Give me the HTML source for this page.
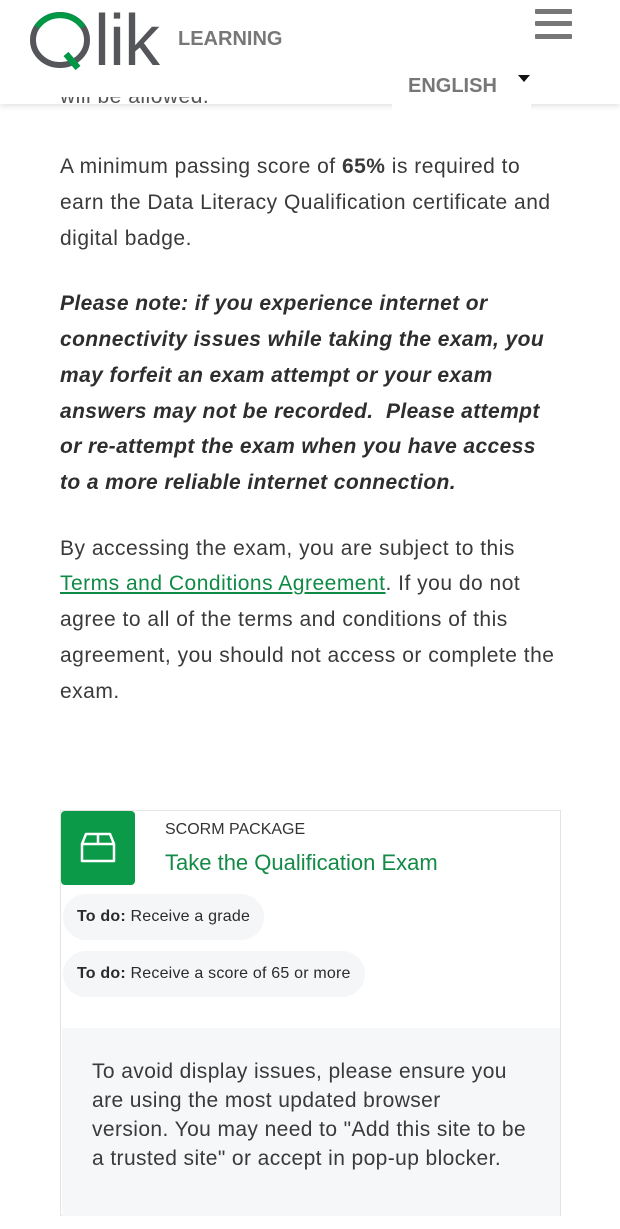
<!DOCTYPE html>
<html><head><meta charset="utf-8"><style>
*{margin:0;padding:0;box-sizing:border-box}
html,body{width:620px;height:1229px;background:#fff;overflow:hidden;font-family:"Liberation Sans",sans-serif;color:#333}
.l{position:absolute;left:60px;white-space:nowrap;font-size:21px;color:#3a3a3a;letter-spacing:0.5px}
.b{font-weight:bold;font-style:italic;color:#2e2e2e;letter-spacing:0.4px}
a{color:#0f8a45;text-decoration:underline}
.hdr{position:absolute;left:0;top:0;width:620px;height:104px;background:#fff;box-shadow:0 2px 6px rgba(0,0,0,.12);z-index:2}
.card{position:absolute;left:60px;top:810px;width:501px;height:406px;border:1px solid #e4e4e4}
.pill{position:absolute;left:2px;height:46px;border-radius:23px;background:#f5f6f8;font-size:16px;color:#2b2b2b;padding:0 14px;line-height:46px;white-space:nowrap;letter-spacing:0.2px}
.gray{position:absolute;left:1px;top:217px;width:498px;height:188px;background:#f6f7f9}
.g{position:absolute;left:30px;white-space:nowrap;font-size:21px;color:#3a3a3a;letter-spacing:0.4px}
</style></head><body>
<div style="position:absolute;left:0;top:97px;width:620px;height:7px;overflow:hidden;z-index:4"><div class="l" style="top:-12px;color:#555">will be allowed.</div></div>
<div class="hdr">
 <svg style="position:absolute;left:28px;top:10px" width="70" height="62" viewBox="0 0 70 62">
  <ellipse cx="32" cy="30" rx="27" ry="25" fill="none" stroke="#54565a" stroke-width="6"/>
  <path d="M9 17 A27 25 0 0 1 55 17" fill="none" stroke="#009845" stroke-width="6"/>
  <path d="M38 44 L50 58" stroke="#009845" stroke-width="6.5"/>
 </svg>
 <div style="position:absolute;left:94px;top:0px;font-size:72px;color:#54565a;letter-spacing:-1px">lik</div>
 <div style="position:absolute;left:178px;top:28px;font-size:20px;font-weight:bold;color:#777">LEARNING</div>
 <div style="position:absolute;left:535px;top:9px;width:37px;height:5px;background:#777;border-radius:1px"></div>
 <div style="position:absolute;left:535px;top:21px;width:37px;height:5px;background:#777;border-radius:1px"></div>
 <div style="position:absolute;left:535px;top:34px;width:37px;height:5px;background:#777;border-radius:1px"></div>
</div>
<div style="position:absolute;left:392px;top:60px;width:139px;height:52px;background:#fff;z-index:5;border-radius:0 0 4px 4px">
 <div style="position:absolute;left:16px;top:15px;font-size:20px;font-weight:bold;color:#777">ENGLISH</div>
 <div style="position:absolute;left:126px;top:15px;width:0;height:0;border-left:6px solid transparent;border-right:6px solid transparent;border-top:7px solid #111"></div>
</div>

<div class="l" style="top:155px">A minimum passing score of <b>65%</b> is required to</div>
<div class="l" style="top:191px">earn the Data Literacy Qualification certificate and</div>
<div class="l" style="top:227px">digital badge.</div>

<div class="l b" style="top:292px">Please note: if you experience internet or</div>
<div class="l b" style="top:328px">connectivity issues while taking the exam, you</div>
<div class="l b" style="top:364px">may forfeit an exam attempt or your exam</div>
<div class="l b" style="top:400px">answers may not be recorded.&nbsp; Please attempt</div>
<div class="l b" style="top:435px">or re-attempt the exam when you have access</div>
<div class="l b" style="top:471px">to a more reliable internet connection.</div>

<div class="l" style="top:537px">By accessing the exam, you are subject to this</div>
<div class="l" style="top:572px"><a>Terms and Conditions Agreement</a>. If you do not</div>
<div class="l" style="top:608px">agree to all of the terms and conditions of this</div>
<div class="l" style="top:644px">agreement, you should not access or complete the</div>
<div class="l" style="top:680px">exam.</div>

<div class="card">
 <div style="position:absolute;left:0;top:0;width:74px;height:74px;background:#0a9a48;border-radius:4px">
  <svg style="position:absolute;left:19px;top:21px" width="36" height="32" viewBox="0 0 36 32"><path d="M2 12 L6 2 H30 L34 12 V29 H2 Z M2 12 H34 M18 2 V12" fill="none" stroke="#fff" stroke-width="2.5" stroke-linejoin="round"/></svg>
 </div>
 <div style="position:absolute;left:104px;top:10px;font-size:16px;color:#333">SCORM PACKAGE</div>
 <div style="position:absolute;left:104px;top:39px;font-size:22px;color:#138a46;letter-spacing:0px">Take the Qualification Exam</div>
 <div class="pill" style="top:83px"><b>To do:</b> Receive a grade</div>
 <div class="pill" style="top:140px"><b>To do:</b> Receive a score of 65 or more</div>
 <div class="gray">
  <div class="g" style="top:32px">To avoid display issues, please ensure you</div>
  <div class="g" style="top:61px">are using the most updated browser</div>
  <div class="g" style="top:90px">version. You may need to "Add this site to be</div>
  <div class="g" style="top:119px">a trusted site" or accept in pop-up blocker.</div>
 </div>
</div>
</body></html>
